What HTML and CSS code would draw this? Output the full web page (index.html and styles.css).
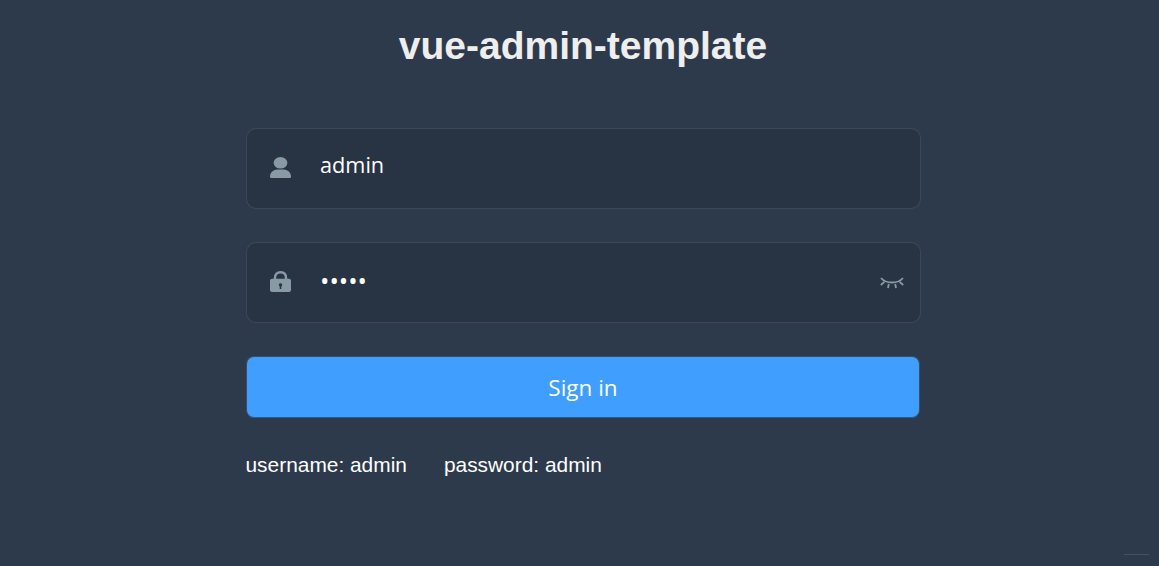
FILE: index.html
```html
<!DOCTYPE html>
<html lang="en">

<head>
    <meta charset="UTF-8">
    <meta name="viewport" content="width=device-width, initial-scale=1.0">
    <title>vue-admin-template</title>
    <link rel="stylesheet" href="styles.css">
</head>

<body>
    <form class="login-form">
        <h3 class="title">vue-admin-template</h3>

        <div class="form-item">
            <span class="svg-container">
                <svg class="icon" viewBox="0 0 21 21">
                    <ellipse cx="10.5" cy="5.8" rx="6.9" ry="5.8" fill="#889aa4" />
                    <path d="M0 19.5C0 15.500 3.500 12.500 7.500 12.500h6c4 0 7.500 3 7.500 7 0 1-.5 1.500-1.500 1.500h-18C.5 21 0 20.500 0 19.500z" fill="#889aa4" />
                </svg>
            </span>
            <input class="input" type="text" name="username" value="admin">
        </div>

        <div class="form-item">
            <span class="svg-container">
                <svg class="icon" viewBox="0 0 21 21">
                    <path d="M5 9V6.800C5 3.200 7.200 1.200 10.500 1.200S16 3.200 16 6.800V9" fill="none" stroke="#889aa4" stroke-width="2.400" />
                    <path fill-rule="evenodd" d="M2 7.700h17c1.100 0 2 .9 2 2V19c0 1.100-.9 2-2 2H2c-1.100 0-2-.9-2-2V9.700c0-1.100.9-2 2-2zm8.500 4.500a1.700 1.700 0 0 0-.8 3.200V18h1.600v-2.600a1.700 1.700 0 0 0-.8-3.200z" fill="#889aa4" />
                </svg>
            </span>
            <input class="input input-password" type="password" name="password" value="admin">
            <span class="show-pwd">
                <svg class="eye" viewBox="0 0 24 12">
                    <path d="M1 1c5 6 17 6 22 0M.8 8l3.600-3.200M23.200 8l-3.600-3.200M8 11l.8-4M16 11l-.8-4" fill="none" stroke="#889aa4" stroke-width="1.800" />
                </svg>
            </span>
        </div>

        <button class="login-btn" type="button">Sign in</button>

        <div class="tips">
            <span>username: admin</span>
            <span>password: admin</span>
        </div>
    </form>
    <div class="corner-mark"></div>
</body>

</html>
```

FILE: styles.css
```css
html,
body {
    height: 100%;
}

body {
    margin: 0;
    background-color: #2d3a4b;
    overflow: hidden;
    font-family: "Open Sans", "Noto Sans", sans-serif;
}

.login-form {
    width: 675px;
    margin-left: 246px;
    padding-top: 23px;
}

.title {
    margin: 0 0 59px;
    font-family: "Liberation Sans", Arial, sans-serif;
    font-size: 39px;
    line-height: 46px;
    font-weight: bold;
    color: #eee;
    text-align: center;
    text-indent: -1px;
}

.form-item {
    display: flex;
    align-items: center;
    height: 81px;
    margin-bottom: 33px;
    box-sizing: border-box;
    background: #283443;
    border: 1px solid rgba(255, 255, 255, 0.1);
    border-radius: 10px;
}

.svg-container {
    display: flex;
    width: 21px;
    margin-left: 23px;
    margin-top: -2px;
}

.icon {
    width: 21px;
    height: 21px;
}

.input {
    flex: 1;
    min-width: 0;
    margin-left: 29px;
    margin-top: -7px;
    padding: 0;
    border: 0;
    outline: 0;
    background: transparent;
    color: #fff;
    font-family: inherit;
    font-size: 21.7px;
    line-height: 30px;
}

.input-password {
    font-size: 25px;
    margin-top: -5px;
}

.show-pwd {
    display: flex;
    margin-right: 16px;
}

.eye {
    width: 24px;
    height: 12px;
}

.login-btn {
    display: block;
    width: 674px;
    height: 62px;
    padding: 0;
    margin-bottom: 35px;
    background: #409eff;
    border: 1px solid #3f4c5e;
    border-bottom-color: #2c5c8f;
    border-radius: 8px;
    color: #fff;
    font-family: inherit;
    font-size: 22.5px;
}

.tips {
    display: flex;
    gap: 37px;
    margin-left: -0.5px;
    color: #fff;
    font-family: "Liberation Sans", Arial, sans-serif;
    font-size: 20.9px;
    line-height: 24px;
}

.corner-mark {
    position: absolute;
    right: 10px;
    bottom: 11px;
    width: 25px;
    height: 1px;
    background: rgba(255, 255, 255, 0.12);
}
```
